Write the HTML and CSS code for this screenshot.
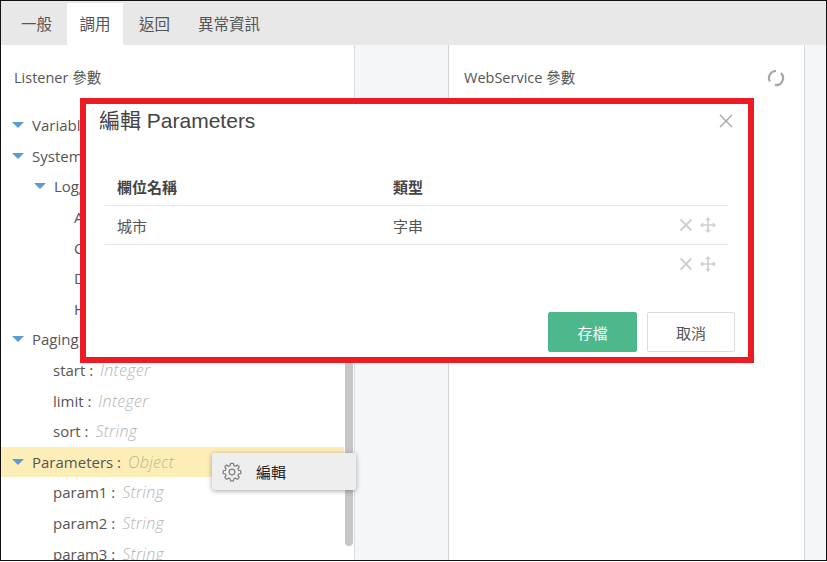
FILE: index.html
```html
<!DOCTYPE html>
<html lang="zh-Hant">
<head>
<meta charset="utf-8">
<title>編輯 Parameters</title>
<link rel="stylesheet" href="styles.css">
</head>
<body>
<div class="frame">
  <nav class="tabs">
    <span class="tab">一般</span>
    <span class="tab active">調用</span>
    <span class="tab">返回</span>
    <span class="tab">異常資訊</span>
  </nav>
  <main class="cols">
    <section class="pane left">
      <h2 class="pane-title">Listener 參數</h2>
      <div class="tree-wrap">
        <ul class="tree">
          <li class="row l0"><i class="caret"></i>Variables</li>
          <li class="row l0"><i class="caret"></i>System</li>
          <li class="row l1"><i class="caret"></i>Logging</li>
          <li class="row l2">Accept</li>
          <li class="row l2">Content</li>
          <li class="row l2">Date</li>
          <li class="row l2">Host</li>
          <li class="row l0"><i class="caret"></i>Paging</li>
          <li class="row l1b">start : <em>Integer</em></li>
          <li class="row l1b">limit : <em>Integer</em></li>
          <li class="row l1b">sort : <em>String</em></li>
          <li class="row l0 selected"><i class="caret"></i>Parameters : <em>Object</em></li>
          <li class="row l1b">param1 : <em>String</em></li>
          <li class="row l1b">param2 : <em>String</em></li>
          <li class="row l1b">param3 : <em>String</em></li>
        </ul>
        <div class="scrollbar"></div>
      </div>
    </section>
    <div class="gutter"></div>
    <section class="pane right">
      <div class="right-head">
        <h2 class="pane-title">WebService 參數</h2>
        <svg class="refresh" width="18" height="18" viewBox="0 0 18 18" fill="none" stroke="#a6a6a6" stroke-width="2.200">
          <path d="M2.940 12.500A7 7 0 0 1 9 2"/>
          <path d="M13.950 4.050A7 7 0 0 1 8 15.930"/>
        </svg>
      </div>
    </section>
    <div class="side"></div>
  </main>

  <div class="menu">
    <svg class="gear" width="20" height="20" viewBox="0 0 24 24" fill="none" stroke="#7f7f7f" stroke-width="1.500" stroke-linejoin="round">
      <path d="M10.300 2.500h3.400l.5 2.800 1.800.8 2.400-1.600 2.300 2.400-1.600 2.300.8 1.800 2.600.5v3.400l-2.600.5-.8 1.800 1.600 2.300-2.300 2.400-2.400-1.600-1.800.8-.5 2.600h-3.400l-.5-2.600-1.800-.8-2.400 1.600-2.300-2.400 1.600-2.300-.8-1.800-2.600-.5v-3.400l2.600-.5.8-1.800-1.600-2.300 2.300-2.400 2.400 1.600 1.800-.8z" transform="translate(0 -1)"/>
      <circle cx="12" cy="12" r="3.400"/>
    </svg>
    <span class="menu-label">編輯</span>
  </div>

  <div class="modal" role="dialog">
    <header class="modal-head">
      <h1 class="modal-title">編輯 Parameters</h1>
      <svg class="close" width="16" height="16" viewBox="0 0 16 16" stroke="#a3a3a3" stroke-width="1.400"><path d="M2 2l12 12M14 2L2 14"/></svg>
    </header>
    <div class="table">
      <div class="tr th"><span class="c1">欄位名稱</span><span class="c2">類型</span></div>
      <div class="tr"><span class="c1">城市</span><span class="c2">字串</span>
        <span class="acts">
          <svg width="14" height="14" viewBox="0 0 14 14" stroke="#cfcfcf" stroke-width="1.800"><path d="M1.500 1.500l11 11M12.500 1.500l-11 11"/></svg>
          <svg width="16" height="16" viewBox="0 0 16 16" fill="#cfcfcf"><path d="M7.200 3h1.600v4.200H13v1.600H8.800V13H7.200V8.800H3V7.200h4.200z"/><path d="M8 0l2.800 3.200H5.200zM8 16l-2.800-3.200h5.600zM0 8l3.200-2.800v5.600zM16 8l-3.200 2.800V5.200z"/></svg>
        </span>
      </div>
      <div class="tr last"><span class="c1"></span><span class="c2"></span>
        <span class="acts">
          <svg width="14" height="14" viewBox="0 0 14 14" stroke="#cfcfcf" stroke-width="1.800"><path d="M1.500 1.500l11 11M12.500 1.500l-11 11"/></svg>
          <svg width="16" height="16" viewBox="0 0 16 16" fill="#cfcfcf"><path d="M7.200 3h1.600v4.200H13v1.600H8.800V13H7.200V8.800H3V7.200h4.200z"/><path d="M8 0l2.800 3.200H5.200zM8 16l-2.800-3.200h5.600zM0 8l3.200-2.800v5.600zM16 8l-3.200 2.800V5.200z"/></svg>
        </span>
      </div>
    </div>
    <footer class="modal-foot">
      <button class="btn primary">存檔</button>
      <button class="btn cancel">取消</button>
    </footer>
  </div>
</div>
</body>
</html>
```
FILE: styles.css
```css
* { box-sizing: border-box; }
html, body { margin: 0; padding: 0; }
body {
  width: 827px;
  height: 562px;
  overflow: hidden;
  background: #fff;
  font-family: "Open Sans", "Noto Sans CJK TC", sans-serif;
  font-size: 15px;
  color: #555;
}
.frame {
  position: relative;
  width: 827px;
  height: 561px;
  border: 1px solid #111;
  overflow: hidden;
  display: flex;
  flex-direction: column;
}
.tabs {
  height: 44px;
  flex: none;
  display: flex;
  padding: 2px 0 0 7px;
  background: #e8e8e8;
}
.tab {
  padding: 0 13px;
  margin-right: 2px;
  line-height: 42px;
  font-size: 15.500px;
  color: #555;
}
.tab.active { background: #fff; padding: 0 12.500px; margin-right: 3px; }
.cols {
  flex: 1;
  min-height: 0;
  display: flex;
}
.pane { background: #fff; overflow: hidden; }
.left { width: 353px; flex: none; display: flex; flex-direction: column; }
.gutter { width: 95px; flex: none; background: #f5f6f8; border-left: 1px solid #dcdcdc; border-right: 1px solid #d4d4d4; }
.right { width: 355px; flex: none; }
.side { flex: 1; background: #f5f6f8; border-left: 1px solid #d8d8d8; }
.pane-title {
  margin: 0;
  padding: 0 0 0 13px;
  height: 66px;
  line-height: 66px;
  font-size: 14.500px;
  font-weight: 400;
  color: #555;
}
.right-head { display: flex; justify-content: space-between; align-items: center; padding-right: 19px; }
.right-head .pane-title { padding-left: 15px; }
.tree-wrap { flex: 1; position: relative; overflow: hidden; }
.tree { list-style: none; margin: -1px 0 0; padding: 0; }
.row {
  height: 30.600px;
  line-height: 30px;
  font-size: 15px;
  color: #555;
  white-space: pre;
  display: flex;
  align-items: center;
}
.row em { color: #b4b4b4; font-style: italic; margin-left: 3px; font-weight: 300; font-size: 16px; letter-spacing: .3px; }
.l0 { padding-left: 11px; }
.l1 { padding-left: 33px; }
.l1b { padding-left: 52px; }
.l2 { padding-left: 73px; }
.caret {
  width: 0; height: 0;
  margin-right: 8px;
  border-left: 6px solid transparent;
  border-right: 6px solid transparent;
  border-top: 6px solid #5b9bd5;
  flex: none;
}
.selected { background: #fdeeb7; margin-right: 10px; color: #555; }
.selected em { color: #bdb48c; }
.scrollbar {
  position: absolute;
  right: 1px; top: 0;
  width: 8px;
  height: 435px;
  background: #c6c6c6;
  border-radius: 0 0 4px 4px;
}
.menu {
  position: absolute;
  left: 211px; top: 452px;
  width: 144px; height: 37px;
  background: #eeeeee;
  border-radius: 2px;
  box-shadow: 0 1px 5px rgba(0,0,0,.35);
  display: flex;
  align-items: center;
  padding-left: 10px;
}
.menu-label { margin-left: 14px; color: #222; font-size: 15px; }
.modal {
  position: absolute;
  left: 79px; top: 97px;
  width: 674px; height: 265px;
  background: #fff;
  border: 6px solid #ed1c24;
  display: flex;
  flex-direction: column;
}
.modal-head { display: flex; justify-content: space-between; padding: 0 14px 0 13px; height: 62px; }
.modal-title { margin: 0; font-size: 21px; font-weight: 400; color: #444; line-height: 33px; font-family: "Liberation Sans", "Noto Sans CJK TC", sans-serif; }
.close { margin-top: 9px; }
.table { margin: 0 20px 0 19px; }
.tr { display: flex; align-items: center; height: 38.500px; border-bottom: 1px solid #e6e6e6; font-size: 15px; color: #555; padding-left: 12px; }
.tr .c1, .tr .c2 { padding-top: 1px; }
.th { font-weight: 700; height: 40px; color: #444; }
.last { border-bottom: 0; }
.c1 { width: 276px; flex: none; }
.c2 { width: 100px; flex: none; }
.acts { margin-left: auto; display: flex; gap: 7px; align-items: center; padding: 1px 12px 0 0; }
.modal-foot { margin-top: auto; display: flex; justify-content: flex-end; gap: 10px; padding: 0 13px 5px 0; }
.btn {
  width: 89px; height: 40px;
  border: 1px solid #ddd;
  border-radius: 2px;
  background: #fff;
  color: #555;
  font: inherit;
  font-size: 15px;
  padding: 0;
}
.btn.cancel { width: 88px; }
.btn.primary { background: #4cb88b; border-color: #4cb88b; color: #fff; }
```
